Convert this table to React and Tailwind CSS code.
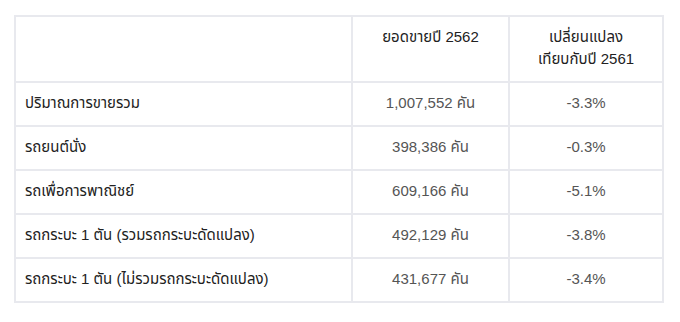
const rows = [
  ['ปริมาณการขายรวม', '1,007,552 คัน', '-3.3%'],
  ['รถยนต์นั่ง', '398,386 คัน', '-0.3%'],
  ['รถเพื่อการพาณิชย์', '609,166 คัน', '-5.1%'],
  ['รถกระบะ 1 ตัน (รวมรถกระบะดัดแปลง)', '492,129 คัน', '-3.8%'],
  ['รถกระบะ 1 ตัน (ไม่รวมรถกระบะดัดแปลง)', '431,677 คัน', '-3.4%'],
];

export default function App() {
  return (
    <div className="w-[680px] h-[322px] bg-white pl-[14px] pt-[15px] font-['Liberation_Sans','Noto_Sans_Thai','Noto_Sans',sans-serif] text-[15px]">
      <table className="w-[650px] border-collapse">
        <thead>
          <tr className="h-[66px]">
            <th className="w-[337px] border-2 border-[#e8e9ee]"></th>
            <th className="w-[157px] border-2 border-[#e8e9ee] align-top pt-[9px] font-normal text-[#222] leading-[22px]">
              ยอดขายปี 2562
            </th>
            <th className="border-2 border-[#e8e9ee] align-top pt-[9px] font-normal text-[#222] leading-[22px]">
              เปลี่ยนแปลง
              <br />
              เทียบกับปี 2561
            </th>
          </tr>
        </thead>
        <tbody>
          {rows.map(([label, total, change]) => (
            <tr key={label} className="h-[44px]">
              <td className="border-2 border-[#e8e9ee] pl-[9px] pb-[1px] text-[#222]">{label}</td>
              <td className="border-2 border-[#e8e9ee] pb-[1px] text-center text-[#555]">{total}</td>
              <td className="border-2 border-[#e8e9ee] pb-[1px] text-center text-[#555]">{change}</td>
            </tr>
          ))}
        </tbody>
      </table>
    </div>
  );
}
